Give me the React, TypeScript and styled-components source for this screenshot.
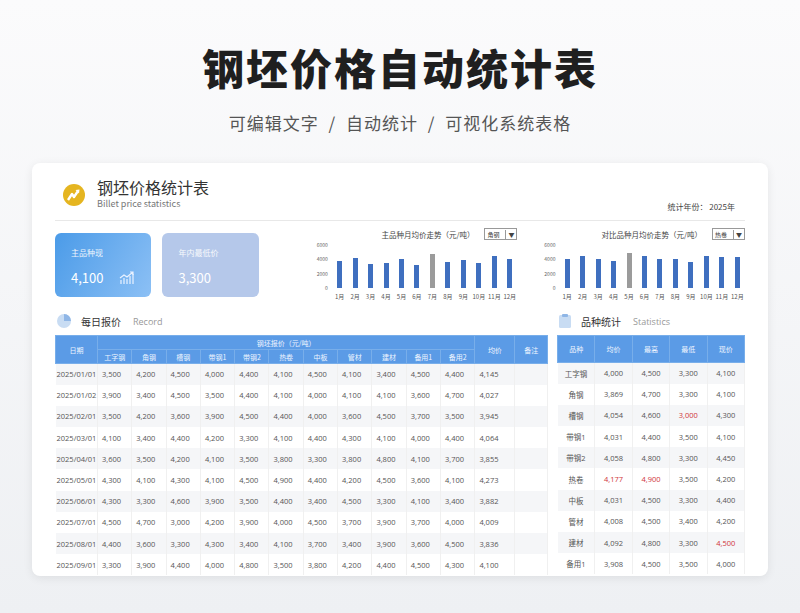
import React from "react";
import styled, { createGlobalStyle } from "styled-components";

const GlobalStyle = createGlobalStyle`
  body {
    margin: 0;
    background: #f3f4f6;
    font-family: "Noto Sans CJK SC", "Noto Sans", sans-serif;
  }
`;

const cols = ["工字钢", "角钢", "槽钢", "带钢1", "带钢2", "热卷", "中板", "管材", "建材", "备用1", "备用2"];

const daily: [string, string[], string][] = [
  ["2025/01/01", ["3,500", "4,200", "4,500", "4,000", "4,400", "4,100", "4,500", "4,100", "3,400", "4,500", "4,400"], "4,145"],
  ["2025/01/02", ["3,900", "3,400", "4,500", "3,500", "4,400", "4,100", "4,000", "4,100", "4,100", "3,600", "4,700"], "4,027"],
  ["2025/02/01", ["3,500", "4,200", "3,600", "3,900", "4,500", "4,400", "4,000", "3,600", "4,500", "3,700", "3,500"], "3,945"],
  ["2025/03/01", ["4,100", "3,400", "4,400", "4,200", "3,300", "4,100", "4,400", "4,300", "4,100", "4,000", "4,400"], "4,064"],
  ["2025/04/01", ["3,600", "3,500", "4,200", "4,100", "3,500", "3,800", "3,300", "3,800", "4,800", "4,100", "3,700"], "3,855"],
  ["2025/05/01", ["4,300", "4,100", "4,300", "4,100", "4,500", "4,900", "4,400", "4,200", "4,500", "3,600", "4,100"], "4,273"],
  ["2025/06/01", ["4,300", "3,300", "4,600", "3,900", "3,500", "4,400", "3,400", "4,500", "3,300", "4,100", "3,400"], "3,882"],
  ["2025/07/01", ["4,500", "4,700", "3,000", "4,200", "3,900", "4,000", "4,500", "3,700", "3,900", "3,700", "4,000"], "4,009"],
  ["2025/08/01", ["4,400", "3,600", "3,300", "4,300", "3,400", "4,100", "3,700", "3,400", "3,900", "3,600", "4,500"], "3,836"],
  ["2025/09/01", ["3,300", "3,900", "4,400", "4,000", "4,800", "3,500", "3,800", "4,200", "4,400", "4,500", "4,300"], "4,100"],
];

// [name, avg, high, low, now] ; "!" marks red
const stats: string[][] = [
  ["工字钢", "4,000", "4,500", "3,300", "4,100"],
  ["角钢", "3,869", "4,700", "3,300", "4,100"],
  ["槽钢", "4,054", "4,600", "!3,000", "4,300"],
  ["带钢1", "4,031", "4,400", "3,500", "4,100"],
  ["带钢2", "4,058", "4,800", "3,300", "4,450"],
  ["热卷", "!4,177", "!4,900", "3,500", "4,200"],
  ["中板", "4,031", "4,500", "3,300", "4,400"],
  ["管材", "4,008", "4,500", "3,400", "4,200"],
  ["建材", "4,092", "4,800", "3,300", "!4,500"],
  ["备用1", "3,908", "4,500", "3,500", "4,000"],
];

const chart1 = [3700, 4100, 3300, 3400, 3900, 3200, 4600, 3600, 3800, 3400, 4300, 4000];
const chart2 = [4000, 4300, 4000, 3700, 4800, 4300, 3900, 4000, 3500, 4300, 4200, 4200];

export default function App() {
  return (
    <>
      <GlobalStyle />
      <Page>
        <Title>钢坯价格自动统计表</Title>
        <Subtitle>可编辑文字 / 自动统计 / 可视化系统表格</Subtitle>
        <Card>
          <Header>
            <Logo>
              <svg width="22" height="22" viewBox="0 0 22 22">
                <circle cx="11" cy="11" r="11" fill="#e5b520" />
                <path d="M5 16 L9 10 L11 13 L15 7" stroke="#fff" strokeWidth="2.4" fill="none" strokeLinejoin="round" />
                <path d="M12.5 6 L16.5 5.5 L16 9.5 Z" fill="#fff" />
              </svg>
            </Logo>
            <HeaderText>
              <HeaderTitle>钢坯价格统计表</HeaderTitle>
              <HeaderSub>Billet price statistics</HeaderSub>
            </HeaderText>
            <Year>统计年份： 2025年</Year>
          </Header>
          <TopRow>
            <Kpi $tone="blue">
              <KpiLabel>主品种现</KpiLabel>
              <KpiValue>
                4,100
                <svg width="16" height="14" viewBox="0 0 16 14" fill="none" stroke="#eaf2ff" strokeWidth="1.2">
                  <path d="M2 13V9M5 13V7M8 13V8M11 13V5M14 13V3" />
                  <path d="M1 7L5 4L8 6L14 1M11 1H14V4" />
                </svg>
              </KpiValue>
            </Kpi>
            <Kpi $tone="pale">
              <KpiLabel>年内最低价</KpiLabel>
              <KpiValue>3,300</KpiValue>
            </Kpi>
            <BarChart title="主品种月均价走势（元/吨）" sel="角钢" data={chart1} hi={6} />
            <BarChart title="对比品种月均价走势（元/吨）" sel="热卷" data={chart2} hi={4} />
          </TopRow>
          <Bottom>
            <LeftCol>
              <SectionHead>
                <svg width="14" height="14" viewBox="0 0 14 14">
                  <circle cx="7" cy="7" r="7" fill="#c8dcf3" />
                  <path d="M7 7V0A7 7 0 0 1 14 7Z" fill="#8fb6e6" />
                </svg>
                <SecTitle>每日报价</SecTitle>
                <SecEn>Record</SecEn>
              </SectionHead>
              <Table>
                <colgroup>
                  <col style={{ width: 42 }} />
                  {cols.map((c) => (
                    <col key={c} style={{ width: 34.3 }} />
                  ))}
                  <col style={{ width: 40 }} />
                  <col />
                </colgroup>
                <thead>
                  <tr>
                    <Th rowSpan={2}>日期</Th>
                    <Th colSpan={11} $h={13}>钢坯报价（元/吨）</Th>
                    <Th rowSpan={2}>均价</Th>
                    <Th rowSpan={2}>备注</Th>
                  </tr>
                  <tr>
                    {cols.map((c) => (
                      <Th key={c} $h={13}>{c}</Th>
                    ))}
                  </tr>
                </thead>
                <tbody>
                  {daily.map(([d, v, a]) => (
                    <Tr key={d}>
                      <Td $left>{d}</Td>
                      {v.map((x, i) => (
                        <Td key={i}>{x}</Td>
                      ))}
                      <Td>{a}</Td>
                      <Td />
                    </Tr>
                  ))}
                </tbody>
              </Table>
            </LeftCol>
            <RightCol>
              <SectionHead>
                <svg width="12" height="14" viewBox="0 0 12 14">
                  <rect x="0" y="1" width="12" height="13" rx="1.5" fill="#c8dcf3" />
                  <rect x="3" y="0" width="6" height="3" rx="1" fill="#8fb6e6" />
                </svg>
                <SecTitle>品种统计</SecTitle>
                <SecEn>Statistics</SecEn>
              </SectionHead>
              <Table>
                <thead>
                  <tr>
                    {["品种", "均价", "最高", "最低", "现价"].map((h) => (
                      <Th key={h} $h={26}>{h}</Th>
                    ))}
                  </tr>
                </thead>
                <tbody>
                  {stats.map((r) => (
                    <Tr key={r[0]}>
                      {r.map((x, i) => (
                        <Td key={i} $center $red={x.startsWith("!")}>
                          {x.replace("!", "")}
                        </Td>
                      ))}
                    </Tr>
                  ))}
                </tbody>
              </Table>
            </RightCol>
          </Bottom>
        </Card>
      </Page>
    </>
  );
}

function BarChart({ title, sel, data, hi }: { title: string; sel: string; data: number[]; hi: number }) {
  return (
    <Chart>
      <ChartHead>
        {title}
        <Select>
          {sel}
          <Arrow>▼</Arrow>
        </Select>
      </ChartHead>
      <Plot>
        <Axis>
          {["6000", "4000", "2000", "0"].map((t) => (
            <span key={t}>{t}</span>
          ))}
        </Axis>
        <BarsWrap>
          <Bars>
            {data.map((v, i) => (
              <BarSlot key={i}>
                <Bar $gray={i === hi} style={{ height: `${(v / 6000) * 100}%` }} />
              </BarSlot>
            ))}
          </Bars>
          <Months>
            {data.map((_, i) => (
              <span key={i}>{i + 1}月</span>
            ))}
          </Months>
        </BarsWrap>
      </Plot>
    </Chart>
  );
}

const Page = styled.div`
  width: 800px;
  height: 613px;
  overflow: hidden;
  display: flex;
  flex-direction: column;
  align-items: center;
  background: linear-gradient(#fbfbfc, #eef0f3);
`;

const Title = styled.h1`
  margin: 38px 0 0;
  font-size: 42px;
  line-height: 58px;
  font-weight: 900;
  color: #1f1f1f;
  letter-spacing: 2px;
`;

const Subtitle = styled.div`
  margin-top: 14px;
  font-size: 17px;
  color: #555;
  letter-spacing: 1px;
  word-spacing: 5px;
`;

const Card = styled.div`
  margin-top: 28px;
  width: 736px;
  height: 413px;
  background: #fff;
  border-radius: 8px;
  box-shadow: 0 2px 10px rgba(0, 0, 0, 0.08);
  padding: 0 23px;
  box-sizing: border-box;
  overflow: hidden;
`;

const Header = styled.div`
  display: flex;
  align-items: center;
  height: 57px;
  border-bottom: 1px solid #e8e8e8;
  padding-left: 8px;
`;

const Logo = styled.div`
  display: flex;
  margin-top: 6px;
`;

const HeaderText = styled.div`
  margin-left: 12px;
  display: flex;
  flex-direction: column;
  margin-top: 4px;
  gap: 2px;
`;

const HeaderTitle = styled.div`
  font-size: 16px;
  color: #333;
  line-height: 18px;
`;

const HeaderSub = styled.div`
  font-size: 9px;
  color: #777;
  line-height: 11px;
`;

const Year = styled.div`
  margin-left: auto;
  margin-top: 30px;
  margin-right: 10px;
  font-size: 8px;
  color: #444;
`;

const TopRow = styled.div`
  display: flex;
  padding-top: 12px;
  height: 76px;
`;

const Kpi = styled.div<{ $tone: "blue" | "pale" }>`
  width: 99px;
  height: 64px;
  border-radius: 6px;
  margin-right: 11px;
  padding: 14px 16px;
  box-sizing: border-box;
  color: #fff;
  background: ${(p) =>
    p.$tone === "blue" ? "linear-gradient(120deg, #4b9be8, #8cc0f5)" : "#b5c8ea"};
`;

const KpiLabel = styled.div`
  font-size: 8px;
  opacity: 0.9;
`;

const KpiValue = styled.div`
  margin-top: 10px;
  font-size: 13px;
  display: flex;
  align-items: center;
  justify-content: space-between;
`;

const Chart = styled.div`
  width: 220px;
  margin-left: 16px;
  display: flex;
  flex-direction: column;
  &:nth-of-type(3) {
    margin-left: 36px;
  }
`;

const ChartHead = styled.div`
  display: flex;
  justify-content: flex-end;
  align-items: center;
  font-size: 7.5px;
  color: #444;
  height: 14px;
  margin-top: -6px;
`;

const Select = styled.div`
  margin-left: 10px;
  width: 33px;
  height: 12px;
  border: 1px solid #999;
  font-size: 6px;
  display: flex;
  align-items: center;
  padding-left: 2px;
  box-sizing: border-box;
  justify-content: space-between;
`;

const Arrow = styled.span`
  font-size: 6px;
  border-left: 1px solid #999;
  padding: 0 2px;
`;

const Plot = styled.div`
  display: flex;
  margin-top: 3px;
`;

const Axis = styled.div`
  width: 22px;
  height: 50px;
  display: flex;
  flex-direction: column;
  justify-content: space-between;
  align-items: flex-end;
  font-size: 5px;
  color: #666;
  margin-top: -3px;
  padding-right: 4px;
`;

const BarsWrap = styled.div`
  flex: 1;
`;

const Bars = styled.div`
  height: 44px;
  display: flex;
  align-items: flex-end;
`;

const BarSlot = styled.div`
  flex: 1;
  height: 100%;
  display: flex;
  align-items: flex-end;
  justify-content: center;
`;

const Bar = styled.div<{ $gray?: boolean }>`
  width: 5px;
  background: ${(p) => (p.$gray ? "#9b9b9b" : "#3f6fbf")};
`;

const Months = styled.div`
  display: flex;
  margin-top: 4px;
  span {
    flex: 1;
    text-align: center;
    font-size: 6px;
    color: #555;
  }
`;

const Bottom = styled.div`
  display: flex;
  gap: 9px;
`;

const LeftCol = styled.div`
  width: 493px;
`;

const RightCol = styled.div`
  width: 188px;
`;

const SectionHead = styled.div`
  display: flex;
  align-items: center;
  height: 28px;
  padding-left: 2px;
  margin-top: -2px;
`;

const SecTitle = styled.span`
  font-size: 10px;
  color: #333;
  margin-left: 10px;
`;

const SecEn = styled.span`
  font-size: 9px;
  color: #999;
  margin-left: 12px;
  font-family: "Open Sans", sans-serif;
`;

const Table = styled.table`
  width: 100%;
  border-collapse: collapse;
  table-layout: fixed;
  font-size: 7.5px;
`;

const Th = styled.th<{ $h?: number }>`
  background: #5b9be6;
  color: #eef5ff;
  font-weight: 400;
  font-size: 7px;
  height: ${(p) => p.$h ?? 13}px;
  padding: 0;
  border: 1px solid #78aeea;
`;

const Tr = styled.tr`
  height: 21.2px;
  &:nth-child(odd) {
    background: #f5f6f8;
  }
`;

const Td = styled.td<{ $left?: boolean; $center?: boolean; $red?: boolean }>`
  padding: 0 0 0 ${(p) => (p.$center ? 0 : 4)}px;
  text-align: ${(p) => (p.$center ? "center" : "left")};
  color: ${(p) => (p.$red ? "#d0353a" : "#555")};
  border-right: 1px solid #f0f0f0;
  white-space: nowrap;
  font-family: "Open Sans", "Noto Sans CJK SC", sans-serif;
  ${(p) => p.$left && "padding-left: 1px;"}
`;
